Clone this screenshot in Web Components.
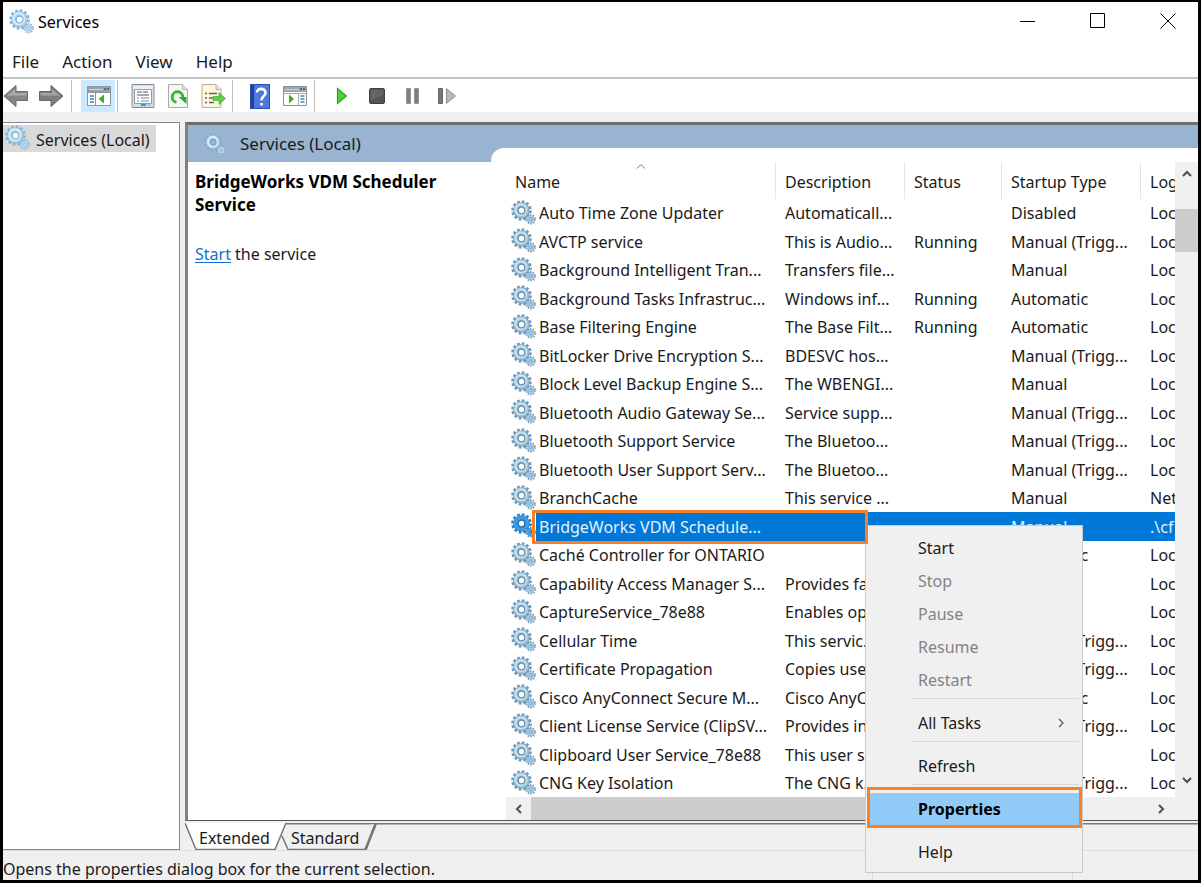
<!DOCTYPE html>
<html lang="en">
<head>
<meta charset="utf-8">
<title>Services</title>
<style>
body { margin: 0; background: #fff; font: 16px/22px "Noto Sans", "Open Sans", sans-serif; color: #1a1a1a; }
</style>
</head>
<body>
<services-window></services-window>

<script>
const define = (name, html, setup) => {
  const template = document.createElement('template');
  template.innerHTML = html;
  customElements.define(name, class extends HTMLElement {
    constructor() {
      super();
      this.attachShadow({ mode: 'open' }).append(template.content.cloneNode(true));
      if (setup) setup(this.shadowRoot, this);
    }
  });
};

/* Two meshed cogwheels */
define('gear-icon', `
<style>
:host { display: block; width: 25px; height: 25px; flex: none; --edge: #7399b6; --body: #9fc6e0; --shine: #cbe4f3; --hub: #fff; --line: #6d8ca6; }
:host([tone="light"]) { --edge: #86b4d6; --body: #b0d7ef; --shine: #d8eefa; --line: #93b3ca; }
:host([tone="selected"]) { --edge: #2d7fc4; --body: #4a9fe0; --shine: #3b93da; --hub: #fff; --line: #1f6cb3; }
:host([tone="faint"]) { --edge: #86acca; --body: #b5d7ec; --shine: #dcf0f8; --hub: #99b4d1; --line: #82a4c2; }
svg { display: block; width: 100%; height: 100%; }
</style>
<svg viewBox="0 0 25 25" aria-hidden="true">
  <circle cx="10.5" cy="10.5" r="8.600" fill="none" stroke="var(--edge)" stroke-width="3.4" stroke-dasharray="2.6 1.9"/>
  <circle cx="10.5" cy="10.5" r="5.8" fill="none" stroke="var(--edge)" stroke-width="5"/>
  <circle cx="10.3" cy="10.2" r="5.6" fill="none" stroke="var(--body)" stroke-width="4"/>
  <circle cx="9.800" cy="9.800" r="5.4" fill="none" stroke="var(--shine)" stroke-width="1.8"/>
  <circle cx="10.5" cy="10.5" r="3.3" fill="var(--hub)" stroke="var(--line)" stroke-width="1.3"/>
  <circle cx="19.7" cy="19.3" r="4.2" fill="none" stroke="var(--edge)" stroke-width="2" stroke-dasharray="1.5 1.14"/>
  <circle cx="19.7" cy="19.3" r="2.6" fill="none" stroke="var(--body)" stroke-width="2.4"/>
  <circle cx="19.7" cy="19.3" r="1.2" fill="var(--shine)" stroke="var(--line)" stroke-width=".8"/>
</svg>`);

define('title-bar', `
<style>
:host { display: flex; align-items: center; height: 40px; background: #fff; color: #000; }
gear-icon { margin: 0 4px 2px 6px; }
h1 { margin: 0; font: inherit; flex: 1; }
button { width: 70px; height: 36px; padding: 0; margin-bottom: 2px; border: 0; background: none; display: grid; place-items: center; }
button:last-child { width: 60px; margin-left: 6px; }
svg { display: block; width: 16px; height: 16px; fill: none; stroke: #000; }
button:first-of-type { width: 68px; }
</style>
<gear-icon tone="light"></gear-icon><h1>Services</h1>
<button aria-label="Minimize"><svg><path d="M0 8.5h15"/></svg></button>
<button aria-label="Maximize"><svg><path d="M1.500.5h14v14h-14z"/></svg></button>
<button aria-label="Close"><svg><path d="M.5.5l15 15M15.500.5l-15 15"/></svg></button>`);

define('menu-bar', `
<style>
:host { display: flex; gap: 23px; height: 35px; padding: 0 9px; align-items: center; background: #fff; }
button { font: inherit; font-size: 17px; color: inherit; border: 0; background: none; padding: 0; line-height: 24px; margin-top: 4px; }
</style>
<button>File</button><button>Action</button><button>View</button><button>Help</button>`);

define('tool-bar', `
<style>
:host { display: flex; height: 33px; border-top: 2px solid #c3c5c8; background: #fff; align-items: center; }
button { width: 26px; height: 32px; padding: 1px 0 0; border: 0; background: none; display: grid; place-items: center; flex: none; }
button.on { width: 34px; background: #cce8ff; padding: 2px 0 0 1px; }
.group { display: flex; gap: 9px; }
.rule { width: 1px; height: 32px; background: #bdbdbd; margin: 0 14px 0 6px; flex: none; }
.rule.near { margin: 0 9px 0 7px; }
.rule.tight { margin: 0 12px 0 2px; }
svg { display: block; }
</style>
<div class="group">
<button aria-label="Back"><svg width="26" height="24"><path d="M1 12L13 1.500v6h11.500v9H13v6z" fill="#858585" stroke="#6b6b6b"/><path d="M4 12l8-7v4h11.500v2.500H10z" fill="#aaa"/></svg></button>
<button aria-label="Forward"><svg width="26" height="24"><path d="M25 12L13 1.500v6H1.500v9H13v6z" fill="#7d7d7d" stroke="#666"/><path d="M22 12l-8-7v4H2.500v2.500H16z" fill="#a2a2a2"/></svg></button>
</div><span class="rule near"></span>
<button class="on" aria-label="Show or hide console tree"><svg width="24" height="21"><path d="M.5.5h23v19H.5z" fill="#fff" stroke="#8d97a1"/><path d="M1 1h22v5H1z" fill="#96a1ac"/><path d="M2 3.500h14" stroke="#d2d8de"/><path d="M17 3h2m1 0h2" stroke="#5e6a76" stroke-width="2"/><path d="M1 6.500h22M8.500 7v12" stroke="#8d97a1"/><path d="M3 10h4M3 13h4M3 16h4" stroke="#3e82bd" stroke-width="1.400"/><path d="M17 8.500v9L11.500 13z" fill="#35b41d"/></svg></button>
<span class="rule tight"></span>
<div class="group">
<button aria-label="Properties"><svg width="24" height="24"><path d="M1 .5h22v23H1z" fill="#d9dde1" stroke="#858c94"/><path d="M2 2h20v3H2z" fill="#eff1f3"/><path d="M3.500 5.500h17v14h-17z" fill="#fff" stroke="#929ba5"/><path d="M6 8h5M12 8h5M6 11h12" stroke="#a1a9b1" stroke-width="2"/><path d="M6 14h2m2 0h8M6 17h2m2 0h8" stroke="#788792"/><path d="M10 21h5" stroke="#18a5e8" stroke-width="2"/><path d="M16 21h4" stroke="#92d5f4" stroke-width="2"/></svg></button>
<button aria-label="Refresh"><svg width="20" height="24"><path d="M.5.5h14l5 5v18H.5z" fill="#f6f8f5" stroke="#a6aaa6"/><path d="M14.500.5v5h5" fill="#e3e5e3" stroke="#b6bab6"/><path d="M8.500 18.300A5.300 5.300 0 1 1 14.800 13.500" fill="none" stroke="#36b935" stroke-width="3"/><path d="M10.500 13h8v7z" fill="#2cae2c"/></svg></button>
<button aria-label="Export list"><svg width="25" height="24"><path d="M1 .5h14l5 5v18H1z" fill="#fdf8dc" stroke="#b5ae99"/><path d="M15 .5v5h5" fill="#efe8c8" stroke="#b5ae99"/><path d="M4 9.500h2M4 14h2M4 18.500h2M8 9.500h8M8 14h5M8 18.500h5" stroke="#615f69" stroke-width="1.500"/><path d="M12 12.500h6v-4l6.500 6-6.500 6v-4h-6z" fill="#65ce46" stroke="#43ad30" stroke-width=".7"/></svg></button>
</div><span class="rule"></span>
<div class="group">
<button aria-label="Help"><svg width="20" height="25"><path d="M0 0h20v25H0z" fill="#2a4eb0"/><path d="M4 1h15v23H4z" fill="#4d78dc"/><path d="M1 1h3v23H1z" fill="#203f9e"/><path d="M7 8.500c0-5 8.500-4.800 8.500.2 0 3.400-4 3.600-4 7.600M11.500 19v2.500" fill="none" stroke="#fff" stroke-width="2.600"/></svg></button>
<button aria-label="Show or hide action pane"><svg width="24" height="21"><path d="M.5.5h23v19H.5z" fill="#fff" stroke="#8b949d"/><path d="M1 1h22v5H1z" fill="#9aa4ae"/><path d="M2 3.500h14" stroke="#d5dade"/><path d="M17 3h2m1 0h2" stroke="#5e6a76" stroke-width="2"/><path d="M1 7.500h22M15.500 8v12" stroke="#a2a9b0"/><path d="M17.500 10h4M17.500 13h4M17.500 16h4" stroke="#3e82bd" stroke-width="1.400"/><path d="M6 8.500v9l5-4.500z" fill="#35b41d"/></svg></button>
</div><span class="rule"></span>
<div class="group">
<button aria-label="Start service"><svg width="12" height="18"><path d="M1.500 1.500L10.500 9l-9 7.500z" fill="#4dd23c" stroke="#2fa425" stroke-width="1.200"/></svg></button>
<button aria-label="Stop service"><svg width="16" height="16"><rect x=".5" y=".5" width="15" height="15" rx="1.500" fill="#555" stroke="#414141"/><path d="M2 2h12v5L2 12z" fill="#666"/></svg></button>
<button aria-label="Pause service"><svg width="13" height="16"><path d="M.5.5h4v15h-4zM8.500.5h4v15h-4z" fill="#7d7d7d" stroke="#999"/></svg></button>
<button aria-label="Restart service"><svg width="19" height="16"><path d="M.5.5h4v15h-4z" fill="#777" stroke="#666"/><path d="M8.500.7L17.500 8l-9 7.300z" fill="#bbb" stroke="#8b8b8b"/></svg></button>
</div>`);

define('tree-pane', `
<style>
:host { display: block; width: 176px; flex: none; border: 1px solid #828790; border-left: 0; background: #fff; }
a { display: flex; align-items: center; gap: 6px; width: 151px; height: 27px; margin-top: 2px; padding-left: 2px; background: #d9d9d9; color: inherit; text-decoration: none; white-space: nowrap; }
gear-icon { margin-bottom: 2px; }
span { margin-top: 2px; }
</style>
<a href="#local"><gear-icon tone="light"></gear-icon><span><slot></slot></span></a>`);

define('service-list', `
<style>
:host { display: grid; grid-template-columns: minmax(0, 1fr) 23px; grid-template-rows: auto 23px; background: #f0f0f0; min-width: 0; flex: 1; }
.view { overflow: hidden; background: #fff; }
table { width: 100%; min-width: 669px; border-collapse: separate; border-spacing: 0; table-layout: fixed; }
col.n { width: 270px; } col.d { width: 129px; } col.s { width: 97px; } col.t { width: 139px; }
th { height: 37px; box-sizing: border-box; padding: 3px 0 0 9px; text-align: left; font-weight: 400; border-right: 1px solid #e5e5e5; position: relative; }
th:last-child { border: 0; }
th svg { position: absolute; left: 50%; top: 1px; margin-left: -5px; }
td { height: 28px; padding: 0 0 0 9px; white-space: nowrap; position: relative; }
tr:nth-child(even) td { height: 29px; }
td:first-child { padding-left: 5px; }
td:last-child, th:last-child { overflow: hidden; }
.name { display: flex; gap: 3px; align-items: center; }
.name gear-icon { margin: -2px 0 0; }
tr.sel td { background: #0078d7; color: #e4f1fc; }
tr.sel td:first-child { background: linear-gradient(90deg, #fff 30px, #0078d7 30px); }
tr.sel td:first-child::after { content: ""; position: absolute; z-index: 3; left: 26px; top: -2px; width: 330px; height: 28px; border: 3px solid #fb8024; }
.v { display: flex; flex-direction: column; justify-content: space-between; align-items: center; }
.h { display: flex; align-items: center; }
.v i { display: block; width: 23px; height: 43px; background: #cdcdcd; }
.v .up { height: 47px; } .v .down { flex: 1; display: flex; align-items: end; }
.h i { height: 23px; width: 77%; background: #cdcdcd; }
.h span { flex: 1; }
.bar button { width: 23px; height: 23px; padding: 0; border: 0; background: none; display: grid; place-items: center; }
.h button { width: 25px; }
.h button:last-child { width: 29px; }
.down button { height: 33px; }
.bar svg { width: 12px; height: 12px; fill: none; stroke: #505050; stroke-width: 2; }
</style>
<div class="view"><table>
<colgroup><col class="n"><col class="d"><col class="s"><col class="t"><col></colgroup>
<thead><tr><th>Name<svg width="10" height="7" fill="none" stroke="#777"><path d="M1 5.500l4-4 4 4"/></svg></th><th>Description</th><th>Status</th><th>Startup Type</th><th>Log</th></tr></thead>
<tbody></tbody></table></div>
<div class="bar v"><div class="up"><button aria-label="Scroll up"><svg><path d="M2 8l4-4 4 4"/></svg></button></div><i></i><div class="down"><button aria-label="Scroll down"><svg><path d="M2 3l4 4 4-4"/></svg></button></div></div>
<div class="bar h"><button aria-label="Scroll left"><svg><path d="M8 2L4 6l4 4"/></svg></button><i></i><span></span><button aria-label="Scroll right"><svg><path d="M4 2l4 4-4 4"/></svg></button></div>
<div></div>`, root => {
  const M = 'Manual', T = 'Manual (Trigg...', A = 'Automatic', R = 'Running';
  const rows = [
    ['Auto Time Zone Updater', 'Automaticall...', '', 'Disabled'],
    ['AVCTP service', 'This is Audio...', R, T],
    ['Background Intelligent Tran...', 'Transfers file...', '', M],
    ['Background Tasks Infrastruc...', 'Windows inf...', R, A],
    ['Base Filtering Engine', 'The Base Filt...', R, A],
    ['BitLocker Drive Encryption S...', 'BDESVC hos...', '', T],
    ['Block Level Backup Engine S...', 'The WBENGI...', '', M],
    ['Bluetooth Audio Gateway Se...', 'Service supp...', '', T],
    ['Bluetooth Support Service', 'The Bluetoo...', '', T],
    ['Bluetooth User Support Serv...', 'The Bluetoo...', '', T],
    ['BranchCache', 'This service ...', '', M, 'Net'],
    ['BridgeWorks VDM Schedule...', '', '', M, '.\\cf'],
    ['Caché Controller for ONTARIO', '', '', A],
    ['Capability Access Manager S...', 'Provides fa...', '', M],
    ['CaptureService_78e88', 'Enables op...', '', M],
    ['Cellular Time', 'This servic...', '', T],
    ['Certificate Propagation', 'Copies use...', '', T],
    ['Cisco AnyConnect Secure M...', 'Cisco AnyC...', '', A],
    ['Client License Service (ClipSV...', 'Provides in...', '', T],
    ['Clipboard User Service_78e88', 'This user s...', '', M],
    ['CNG Key Isolation', 'The CNG k...', '', T]
  ];
  const body = root.querySelector('tbody');
  rows.forEach(([name, desc, status, type, log = 'Loc'], i) => {
    const tr = body.insertRow();
    const box = document.createElement('div');
    const icon = document.createElement('gear-icon');
    const label = document.createElement('span');
    box.className = 'name';
    label.textContent = name;
    if (i === 11) { tr.className = 'sel'; icon.setAttribute('tone', 'selected'); }
    box.append(icon, label);
    tr.insertCell().append(box);
    for (const text of [desc, status, type, log]) tr.insertCell().textContent = text;
  });
});

define('result-pane', `
<style>
:host { display: flex; flex-direction: column; flex: 1; min-width: 0; }
.frame { border-left: 3px solid #808080; border-top: 3px solid #6e6e6e; border-bottom: 1px solid #555; background: #fff; }
.band { display: flex; height: 37px; background: #99b4d1; }
.band h2 { display: flex; align-items: center; gap: 14px; margin: 0; width: 287px; padding-left: 16px; font-size: 17px; font-weight: 400; }
.band h2 gear-icon { width: 22px; height: 22px; }
.band div { flex: 1; margin-top: 23px; background: #fff; border-top-left-radius: 13px; }
.body { display: flex; }
section { width: 311px; padding: 8px 0 0 7px; flex: none; }
h3 { margin: 0 0 27px; font-size: 17px; line-height: 23px; color: #000; width: 260px; }
p { margin: 0; }
a { color: #0f6fd1; text-underline-offset: 2px; }
.tabs { position: relative; height: 27px; margin-top: 2px; display: flex; gap: 4px; padding-left: 14px; overflow: hidden; }
.tabs svg { position: absolute; left: 0; top: 0; width: 100%; height: 28px; }
.tabs button { position: relative; font: inherit; color: inherit; border: 0; padding: 2px 0 0; background: none; width: 88px; text-align: left; }
</style>
<div class="frame">
  <div class="band"><h2><gear-icon tone="faint"></gear-icon>Services (Local)</h2><div></div></div>
  <div class="body">
    <section><h3>BridgeWorks VDM Scheduler Service</h3><p><a href="#start">Start</a> the service</p></section>
    <service-list></service-list>
  </div>
</div>
<div class="tabs">
  <svg fill="none" stroke="#777" stroke-width="1.500" aria-hidden="true"><path d="M101 .7h3000" /><path d="M97 13l6 13.500h78L191 1" fill="#f0f0f0"/><path d="M180.500 26.500L190.500 1" stroke-width="2.500"/><path d="M0 0l11 26.500h79L101 0" fill="#fff"/></svg>
  <button>Extended</button><button>Standard</button>
</div>`);

define('context-menu', `
<style>
:host { display: block; box-sizing: border-box; width: 218px; padding: 6px 3px 3px; border: 1px solid #cacaca; background: #f0f0f0; }
button { position: relative; display: flex; width: 100%; height: 33px; align-items: center; justify-content: space-between; padding: 0 14px 2px 49px; border: 0; background: none; font: inherit; color: inherit; }
button:disabled { color: #838383; }
hr { height: 1px; border: 0; margin: 1px 0 8px 43px; background: #dadada; }
.hot { background: #91c9f7; font-weight: 700; color: #000; }
.hot::after { content: ""; position: absolute; inset: -6px -3px -2px -2px; border: 3px solid #fb8024; }
svg { width: 7px; height: 10px; fill: none; stroke: #555; stroke-width: 1.200; }
</style>
<button>Start</button><button disabled>Stop</button><button disabled>Pause</button><button disabled>Resume</button><button disabled>Restart</button><hr>
<button>All Tasks<svg aria-hidden="true"><path d="M1 1l4 4-4 4"/></svg></button><hr>
<button>Refresh</button><hr>
<button class="hot">Properties</button><hr>
<button>Help</button>`);

define('status-bar', `
<style>
:host { display: flex; height: 29px; border-top: 1px solid #dcdcdc; overflow: hidden; }
span { flex: 1; padding-top: 7px; line-height: 22px; white-space: nowrap; }
i { width: 199px; border-left: 1px solid #dcdcdc; margin-top: 5px; }
i:last-child { width: 125px; }
</style>
<span><slot></slot></span><i></i><i></i>`);

define('services-window', `
<style>
:host { display: flex; flex-direction: column; position: relative; border: 3px solid #000; border-top-width: 2px; margin-bottom: 1px; background: #f0f0f0; overflow: hidden; }
.panes { display: flex; gap: 5px; padding-top: 10px; }
context-menu { position: absolute; left: 862px; top: 523px; z-index: 2; }
</style>
<title-bar></title-bar>
<menu-bar></menu-bar>
<tool-bar></tool-bar>
<div class="panes"><tree-pane>Services (Local)</tree-pane><result-pane></result-pane></div>
<status-bar>Opens the properties dialog box for the current selection.</status-bar>
<context-menu></context-menu>`);
</script>
</body>
</html>
